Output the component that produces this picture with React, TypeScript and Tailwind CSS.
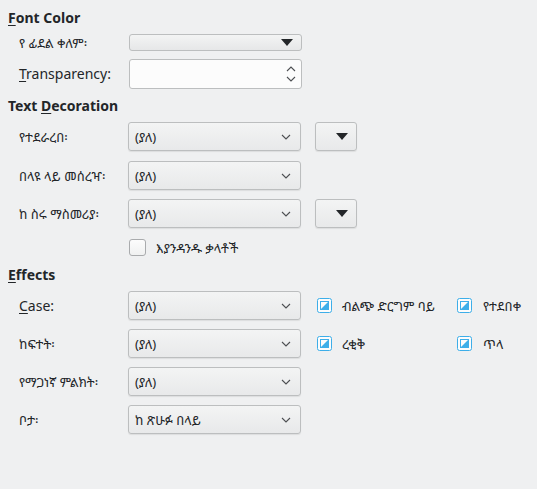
import React from "react";

const F = { fontFamily: '"Noto Sans", "Noto Sans Ethiopic", "Abyssinica SIL", sans-serif' };

function Chevron() {
  return (
    <svg width="10" height="6" viewBox="0 0 10 6" className="shrink-0">
      <path d="M1 1 L5 5 L9 1" fill="none" stroke="#4d4f52" strokeWidth="1.1" />
    </svg>
  );
}

function Tri() {
  return (
    <svg width="12" height="7" viewBox="0 0 12 7" className="shrink-0">
      <path d="M0 0 L12 0 L6 7 Z" fill="#232629" />
    </svg>
  );
}

function Combo({ value }: { value: string }) {
  return (
    <div className="flex h-[29px] w-[173px] shrink-0 items-center justify-between rounded-[3px] border border-[#bcbebf] bg-gradient-to-b from-[#f3f4f4] to-[#e8e9ea] pl-[6px] pr-[9px] shadow-[0_1px_1px_rgba(0,0,0,0.08)]">
      <span className="pt-[1px] text-[13px] leading-none text-[#232629]">{value}</span>
      <Chevron />
    </div>
  );
}

function ColorBtn() {
  return (
    <div className="ml-[14px] flex h-[29px] w-[42px] items-center justify-end rounded-[3px] border border-[#bcbebf] bg-gradient-to-b from-[#f3f4f4] to-[#e8e9ea] pr-[8px] shadow-[0_1px_1px_rgba(0,0,0,0.08)]">
      <Tri />
    </div>
  );
}

function TriCheck() {
  return (
    <svg width="15" height="15" viewBox="0 0 15 15" className="shrink-0">
      <rect x="0.5" y="0.5" width="14" height="14" rx="2" fill="#fcfcfc" stroke="#3daee9" />
      <rect x="3.5" y="3.5" width="8" height="8" fill="#fcfcfc" stroke="#3daee9" />
      <path d="M4 11 L11 11 L11 4 Z" fill="#3daee9" />
    </svg>
  );
}

function Label({ children }: { children: React.ReactNode }) {
  return <div className="w-[109px] shrink-0 pt-[2px] text-[13px] leading-none text-[#232629]">{children}</div>;
}

export default function App() {
  return (
    <div className="h-[489px] w-[537px] bg-[#eff0f1] px-[8px] pt-[7px] text-[#232629]" style={F}>
      <div className="flex h-5 items-center text-[14px] font-bold">
        <span className="underline underline-offset-2">F</span>ont Color
      </div>
      <div className="ml-[11px] mt-[7px] flex h-[17px] items-center">
        <Label>የ ፊደል ቀለም፡</Label>
        <div className="ml-[1px] flex h-[17px] w-[173px] items-center justify-end rounded-[3px] border border-[#bcbebf] bg-gradient-to-b from-[#f3f4f4] to-[#e6e7e8] pr-[8px]">
          <Tri />
        </div>
      </div>
      <div className="ml-[11px] mt-[8px] flex h-[30px] items-center">
        <div className="w-[109px] shrink-0 text-[14px] leading-none">
          <span className="underline underline-offset-2">T</span>ransparency:
        </div>
        <div className="ml-[1px] flex h-[30px] w-[173px] items-center justify-end rounded-[3px] border border-[#bcbebf] bg-[#fcfcfc] pr-[5px]">
          <svg width="10" height="20" viewBox="0 0 10 20">
            <path d="M1 7 L5 3 L9 7" fill="none" stroke="#4d4f52" strokeWidth="1.1" />
            <path d="M1 13 L5 17 L9 13" fill="none" stroke="#4d4f52" strokeWidth="1.1" />
          </svg>
        </div>
      </div>

      <div className="mt-[6px] flex h-5 items-center text-[14px] font-bold">
        Text&nbsp;<span className="underline underline-offset-2">D</span>ecoration
      </div>
      <div className="ml-[11px] mt-[7px] flex h-[29px] items-center">
        <Label>የተደራረበ፡</Label>
        <Combo value="(ያለ)" />
        <ColorBtn />
      </div>
      <div className="ml-[11px] mt-[10px] flex h-[29px] items-center">
        <Label>በላዩ ላይ መሰረዣ፡</Label>
        <Combo value="(ያለ)" />
      </div>
      <div className="ml-[11px] mt-[9px] flex h-[29px] items-center">
        <Label>ከ ስሩ ማስመሪያ፡</Label>
        <Combo value="(ያለ)" />
        <ColorBtn />
      </div>
      <div className="ml-[121px] mt-[11px] flex h-[17px] items-center">
        <div className="h-[17px] w-[17px] rounded-[3px] border border-[#a9abad] bg-gradient-to-b from-[#fcfcfc] to-[#f0f1f1]" />
        <span className="ml-[10px] pt-[2px] text-[13px] leading-none">እያንዳንዱ ቃላቶች</span>
      </div>

      <div className="mt-[8px] flex h-5 items-center text-[14px] font-bold">
        <span className="underline underline-offset-2">E</span>ffects
      </div>
      <div className="ml-[11px] mt-[7px] flex h-[29px] items-center">
        <div className="w-[109px] shrink-0 text-[14px] leading-none">
          <span className="underline underline-offset-2">C</span>ase:
        </div>
        <Combo value="(ያለ)" />
        <div className="ml-[16px] flex w-[140px] items-center">
          <TriCheck />
          <span className="ml-[10px] pt-[2px] text-[13px] leading-none">ብልጭ ድርግም ባይ</span>
        </div>
        <div className="flex items-center">
          <TriCheck />
          <span className="ml-[11px] pt-[2px] text-[13px] leading-none">የተደበቀ</span>
        </div>
      </div>
      <div className="ml-[11px] mt-[9px] flex h-[29px] items-center">
        <Label>ከፍተት፡</Label>
        <Combo value="(ያለ)" />
        <div className="ml-[16px] flex w-[140px] items-center">
          <TriCheck />
          <span className="ml-[10px] pt-[2px] text-[13px] leading-none">ረቂቅ</span>
        </div>
        <div className="flex items-center">
          <TriCheck />
          <span className="ml-[11px] pt-[2px] text-[13px] leading-none">ጥላ</span>
        </div>
      </div>
      <div className="ml-[11px] mt-[9px] flex h-[29px] items-center">
        <Label>የማጋነኛ ምልክት፡</Label>
        <Combo value="(ያለ)" />
      </div>
      <div className="ml-[11px] mt-[9px] flex h-[29px] items-center">
        <Label>ቦታ፡</Label>
        <Combo value="ከ ጽሁፉ በላይ" />
      </div>
    </div>
  );
}
